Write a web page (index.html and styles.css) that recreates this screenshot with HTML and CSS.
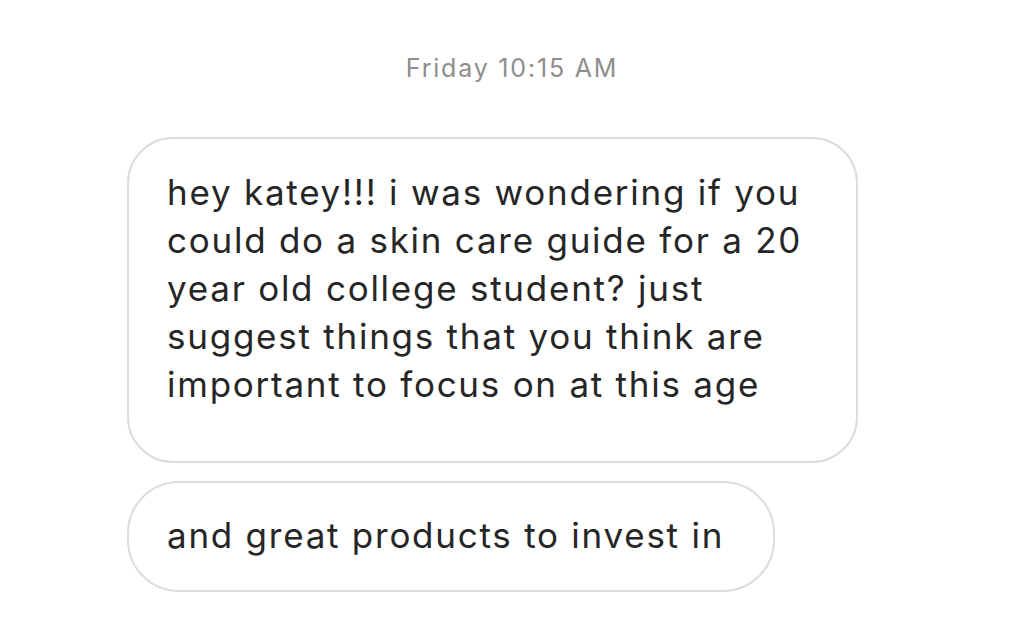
FILE: index.html
```html
<!DOCTYPE html>
<html>
<head>
<meta charset="utf-8">
<link rel="stylesheet" href="styles.css">
</head>
<body>
<div class="thread">
  <div class="time">Friday 10:15 AM</div>
  <div class="bubble first">hey katey!!! i was wondering if you<br>could do a skin care guide for a 20<br>year old college student? just<br>suggest things that you think are<br>important to focus on at this age</div>
  <div class="bubble second">and great products to invest in</div>
</div>
</body>
</html>
```
FILE: styles.css
```css
html, body {
  margin: 0;
  padding: 0;
  background: #ffffff;
}
body {
  width: 1024px;
  height: 624px;
  overflow: hidden;
  font-family: Inter, "Noto Sans", sans-serif;
  color: #262626;
}
.thread {
  display: flex;
  flex-direction: column;
  align-items: flex-start;
  padding: 54px 0 0 127px;
}
.time {
  align-self: stretch;
  margin-left: -127px;
  text-align: center;
  font-size: 25px;
  line-height: 28px;
  letter-spacing: 1.8px;
  color: #8e8e8e;
  margin-bottom: 55px;
}
.bubble {
  box-sizing: border-box;
  border: 2px solid #dcdcdc;
  font-size: 35px;
  line-height: 48px;
  letter-spacing: 1.75px;
  white-space: nowrap;
}
.first {
  width: 731px;
  height: 326px;
  border-radius: 46px;
  padding: 29px 20px 0 38px;
}
.second {
  margin-top: 18px;
  width: 648px;
  height: 111px;
  border-radius: 52px;
  padding: 28px 20px 0 38px;
}
```
